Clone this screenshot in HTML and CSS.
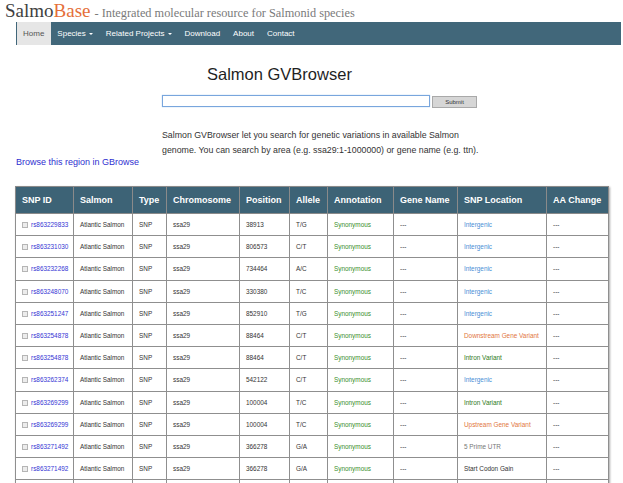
FILE: index.html
```html
<!DOCTYPE html>
<html>
<head>
<meta charset="utf-8">
<title>SalmoBase - Salmon GVBrowser</title>
<link rel="stylesheet" href="styles.css">
</head>
<body>
<header class="site-header">
  <span class="brand"><span class="brand-salmo">Salmo</span><span class="brand-base">Base</span></span>
  <span class="tagline"> - Integrated molecular resource for Salmonid species</span>
</header>
<nav class="navbar">
  <a class="nav-item active" href="#">Home</a>
  <a class="nav-item" href="#">Species<span class="caret"></span></a>
  <a class="nav-item" href="#">Related Projects<span class="caret"></span></a>
  <a class="nav-item" href="#">Download</a>
  <a class="nav-item" href="#">About</a>
  <a class="nav-item" href="#">Contact</a>
</nav>
<main class="content">
  <section class="search">
    <h1 class="title">Salmon GVBrowser</h1>
    <form class="search-form">
      <input class="search-input" type="text">
      <button class="search-btn" type="button">Submit</button>
    </form>
    <p class="intro">Salmon GVBrowser let you search for genetic variations in available Salmon<br>genome. You can search by area (e.g. ssa29:1-1000000) or gene name (e.g. ttn).</p>
  </section>
  <a class="gbrowse" href="#">Browse this region in GBrowse</a>
  <table class="snp-table">
    <colgroup>
      <col class="c1"><col class="c2"><col class="c3"><col class="c4"><col class="c5">
      <col class="c6"><col class="c7"><col class="c8"><col class="c9"><col class="c10">
    </colgroup>
    <thead>
      <tr><th>SNP ID</th><th>Salmon</th><th>Type</th><th>Chromosome</th><th>Position</th><th>Allele</th><th>Annotation</th><th>Gene Name</th><th>SNP Location</th><th>AA Change</th></tr>
    </thead>
    <tbody>
      <tr><td><span class="cb"></span><a href="#">rs863229833</a></td><td>Atlantic Salmon</td><td>SNP</td><td>ssa29</td><td>38913</td><td>T/G</td><td class="syn">Synonymous</td><td>---</td><td class="loc-inter">Intergenic</td><td>---</td></tr>
      <tr><td><span class="cb"></span><a href="#">rs863231030</a></td><td>Atlantic Salmon</td><td>SNP</td><td>ssa29</td><td>806573</td><td>C/T</td><td class="syn">Synonymous</td><td>---</td><td class="loc-inter">Intergenic</td><td>---</td></tr>
      <tr><td><span class="cb"></span><a href="#">rs863232268</a></td><td>Atlantic Salmon</td><td>SNP</td><td>ssa29</td><td>734464</td><td>A/C</td><td class="syn">Synonymous</td><td>---</td><td class="loc-inter">Intergenic</td><td>---</td></tr>
      <tr><td><span class="cb"></span><a href="#">rs863248070</a></td><td>Atlantic Salmon</td><td>SNP</td><td>ssa29</td><td>330380</td><td>T/C</td><td class="syn">Synonymous</td><td>---</td><td class="loc-inter">Intergenic</td><td>---</td></tr>
      <tr><td><span class="cb"></span><a href="#">rs863251247</a></td><td>Atlantic Salmon</td><td>SNP</td><td>ssa29</td><td>852910</td><td>T/G</td><td class="syn">Synonymous</td><td>---</td><td class="loc-inter">Intergenic</td><td>---</td></tr>
      <tr><td><span class="cb"></span><a href="#">rs863254878</a></td><td>Atlantic Salmon</td><td>SNP</td><td>ssa29</td><td>88464</td><td>C/T</td><td class="syn">Synonymous</td><td>---</td><td class="loc-orange">Downstream Gene Variant</td><td>---</td></tr>
      <tr><td><span class="cb"></span><a href="#">rs863254878</a></td><td>Atlantic Salmon</td><td>SNP</td><td>ssa29</td><td>88464</td><td>C/T</td><td class="syn">Synonymous</td><td>---</td><td class="loc-intron">Intron Variant</td><td>---</td></tr>
      <tr><td><span class="cb"></span><a href="#">rs863262374</a></td><td>Atlantic Salmon</td><td>SNP</td><td>ssa29</td><td>542122</td><td>C/T</td><td class="syn">Synonymous</td><td>---</td><td class="loc-inter">Intergenic</td><td>---</td></tr>
      <tr><td><span class="cb"></span><a href="#">rs863269299</a></td><td>Atlantic Salmon</td><td>SNP</td><td>ssa29</td><td>100004</td><td>T/C</td><td class="syn">Synonymous</td><td>---</td><td class="loc-intron">Intron Variant</td><td>---</td></tr>
      <tr><td><span class="cb"></span><a href="#">rs863269299</a></td><td>Atlantic Salmon</td><td>SNP</td><td>ssa29</td><td>100004</td><td>T/C</td><td class="syn">Synonymous</td><td>---</td><td class="loc-orange">Upstream Gene Variant</td><td>---</td></tr>
      <tr><td><span class="cb"></span><a href="#">rs863271492</a></td><td>Atlantic Salmon</td><td>SNP</td><td>ssa29</td><td>366278</td><td>G/A</td><td class="syn">Synonymous</td><td>---</td><td class="loc-utr">5 Prime UTR</td><td>---</td></tr>
      <tr><td><span class="cb"></span><a href="#">rs863271492</a></td><td>Atlantic Salmon</td><td>SNP</td><td>ssa29</td><td>366278</td><td>G/A</td><td class="syn">Synonymous</td><td>---</td><td class="loc-dark">Start Codon Gain</td><td>---</td></tr>
      <tr class="more"><td></td><td></td><td></td><td></td><td></td><td></td><td></td><td></td><td></td><td></td></tr>
    </tbody>
  </table>
</main>
</body>
</html>
```

FILE: styles.css
```css
html, body {
  margin: 0;
  padding: 0;
  background: #ffffff;
}
body {
  font-family: "Liberation Sans", Arial, Helvetica, sans-serif;
  color: #333333;
  overflow: hidden;
  height: 483px;
}
a { text-decoration: none; }

.site-header {
  height: 22px;
  line-height: 21px;
  padding-left: 5px;
  font-family: "Liberation Serif", "Times New Roman", serif;
  white-space: nowrap;
  box-sizing: border-box;
}
.brand { font-size: 19px; }
.brand-salmo { color: #3f3f3f; }
.brand-base { color: #e56f3a; }
.tagline { font-size: 12.3px; color: #7a7a7a; }

.navbar {
  display: flex;
  height: 23px;
  margin: 0 2px 0 16px;
  padding-left: 1px;
  background: #41677a;
  align-items: stretch;
}
.nav-item {
  display: flex;
  align-items: center;
  padding: 0 7px 0 6px;
  font-size: 8px;
  color: #ffffff;
}
.nav-item.active {
  background: #e6e6e6;
  color: #555555;
}
.caret {
  display: inline-block;
  width: 0;
  height: 0;
  margin-left: 3px;
  border-left: 2px solid transparent;
  border-right: 2px solid transparent;
  border-top: 2px solid #ffffff;
}

.content { padding: 0; }

.search {
  padding-left: 162px;
}
.title {
  margin: 19px 0 0 45px;
  height: 20px;
  line-height: 20px;
  font-size: 16.5px;
  font-weight: normal;
  color: #1f1f1f;
}
.search-form {
  display: flex;
  align-items: flex-start;
  gap: 2px;
  margin-top: 11px;
  height: 13px;
}
.search-input {
  width: 268px;
  height: 12px;
  box-sizing: border-box;
  margin: 0;
  padding: 0;
  border: 1px solid #79a6dd;
  box-shadow: 0 0 1px 0 #9cc0ea;
  background: #ffffff;
}
.search-btn {
  width: 45px;
  height: 12px;
  margin: 1px 0 0 0;
  padding: 0;
  box-sizing: border-box;
  border: 1px solid #a9a9a9;
  background: #d6d6d6;
  font-family: "Liberation Sans", Arial, sans-serif;
  font-size: 6px;
  color: #333333;
}
.intro {
  margin: 20px 0 0 0;
  font-size: 8.8px;
  line-height: 15px;
  color: #333333;
  white-space: nowrap;
}

.gbrowse {
  display: block;
  margin-left: 16px;
  height: 8px;
  line-height: 8px;
  font-size: 9px;
  color: #2f2fd0;
  white-space: nowrap;
}

.snp-table {
  margin: 20px 0 0 15px;
  width: 593px;
  table-layout: fixed;
  border-collapse: collapse;
  border: 1px solid #8a8a8a;
  box-shadow: 1px 1px 2px rgba(0,0,0,0.35);
}
.c1 { width: 58px; }
.c2 { width: 59px; }
.c3 { width: 34px; }
.c4 { width: 73px; }
.c5 { width: 50px; }
.c6 { width: 38px; }
.c7 { width: 66px; }
.c8 { width: 64px; }
.c9 { width: 89px; }
.c10 { width: 62px; }

.snp-table th {
  height: 26px;
  padding: 0 0 0 6px;
  background: #3d6376;
  color: #ffffff;
  font-size: 9px;
  font-weight: bold;
  text-align: left;
  border: 1px solid #8a8a8a;
  white-space: nowrap;
  overflow: hidden;
}
.snp-table td {
  height: 22.2px;
  padding: 0 0 0 6px;
  box-sizing: border-box;
  font-size: 6.4px;
  color: #333333;
  border: 1px solid #8f8f8f;
  white-space: nowrap;
  overflow: hidden;
}
.snp-table td a { color: #3535d4; }
.cb {
  display: inline-block;
  width: 4px;
  height: 4px;
  margin-right: 3px;
  border: 1px solid #b5b5b5;
  background: #ececec;
  vertical-align: -1px;
}
.syn { color: #3a8f2e !important; }
.loc-inter { color: #4a8fd6 !important; }
.loc-orange { color: #e2763e !important; }
.loc-intron { color: #2c7a22 !important; }
.loc-utr { color: #777777 !important; }
.loc-dark { color: #333333 !important; }
```
